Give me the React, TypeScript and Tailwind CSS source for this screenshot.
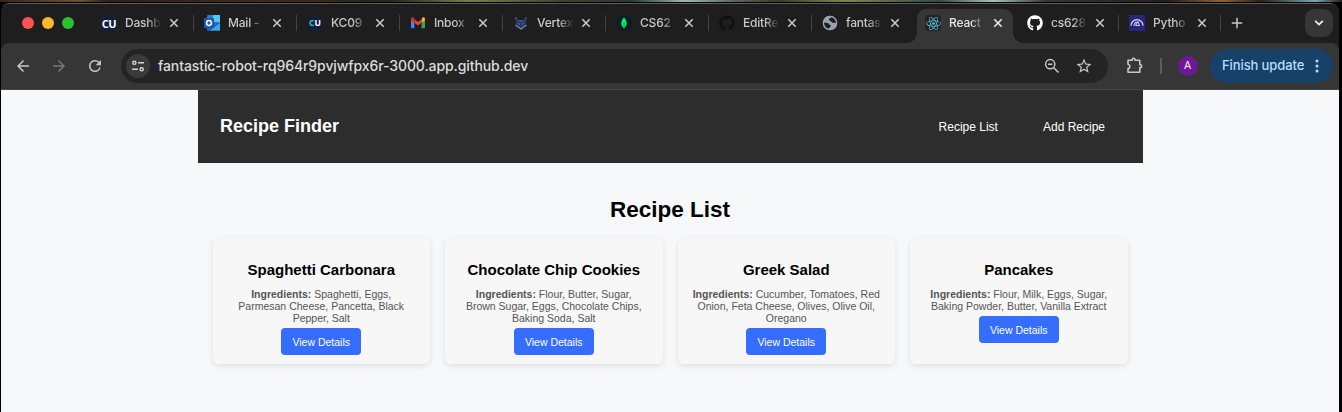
import type { ReactNode } from "react";
import { FaGithub, FaReact } from "react-icons/fa";
import { MdArrowBack, MdArrowForward, MdRefresh, MdStarOutline } from "react-icons/md";

function DashIcon() {
  return (
    <span className="flex h-4 w-4 items-center justify-center bg-[#12203a] font-['Open_Sans',sans-serif] text-[11px] leading-none font-bold tracking-[-0.3px] text-white">
      CU
    </span>
  );
}

function OutlookIcon() {
  return (
    <svg width="16" height="16" viewBox="0 0 16 16">
      <rect x="3" y="0" width="13" height="15.5" rx="1" fill="#2a7fd0" />
      <rect x="9" y="0" width="7" height="7" fill="#50c8f5" />
      <path d="M3 8h13v6.500a1 1 0 0 1-1 1H4a1 1 0 0 1-1-1z" fill="#1b64b6" />
      <path d="M16 8v7.500H6z" fill="#3ba7e8" />
      <rect x="0" y="3" width="10" height="10" rx="1" fill="#1d57b8" />
      <circle cx="5" cy="8" r="2.400" fill="none" stroke="#fff" strokeWidth="1.500" />
    </svg>
  );
}

function CourseIcon() {
  return (
    <span className="flex h-[15px] w-4 items-center justify-center rounded-full bg-[#12203a] font-['Open_Sans',sans-serif] text-[8.500px] leading-none font-bold text-white">
      <span className="text-[#3fc1c9]">C</span>U
    </span>
  );
}

function GmailIcon() {
  return (
    <svg width="16" height="16" viewBox="0 0 16 16">
      <path d="M1 5v7.200a1 1 0 0 0 1 1h2.400V7z" fill="#4285f4" />
      <path d="M15 5v7.200a1 1 0 0 1-1 1h-2.400V7z" fill="#34a853" />
      <path d="M11.600 4.300v3.500L15 5.200V4c0-1.600-1.700-2-2.600-1.300z" fill="#fbbc04" />
      <path d="M4.400 4.300 8 7l3.600-2.700v3.500L8 10.500 4.400 7.800z" fill="#ea4335" />
      <path d="M1 4v1.200l3.400 2.600V4.300L3.600 2.700C2.700 2 1 2.400 1 4z" fill="#d93025" />
    </svg>
  );
}

function VertexIcon() {
  return (
    <svg width="16" height="16" viewBox="0 0 16 16" fill="none">
      <path d="M3 2.500v7L8 13l5-3.500v-7L10.500 5h-5z" fill="#293a65" />
      <path d="M3 2v3M13 2v3M5.500 5.500h1M9.500 5.500h1M5 8l2 1.500M11 8 9 9.500M8 5v2" stroke="#55669c" strokeWidth="1" />
      <path d="m2.500 10 5.500 4 5.500-4" stroke="#7385be" strokeWidth="1.300" />
    </svg>
  );
}

function MongoIcon() {
  return (
    <svg width="16" height="16" viewBox="0 0 16 16">
      <circle cx="8" cy="8" r="8" fill="#071e2b" />
      <path d="M8 2.500c3.700 4 3.200 8.500.3 10.300v.9h-.6v-.9C4.800 11 4.300 6.500 8 2.500z" fill="#13f05c" />
      <path d="M8 7v5" stroke="#087846" strokeWidth=".7" />
    </svg>
  );
}

function GlobeIcon() {
  return (
    <svg width="16" height="16" viewBox="0 0 16 16">
      <circle cx="8" cy="8" r="7.200" fill="#9aa0ac" />
      <path d="M1.900 7.500 5.600 8c1.300.2 1 1.500 2 1.700 1 .3 1.700 1 .9 2-.7.700-1.500.6-1.500 2.400A6.400 6.400 0 0 1 1.900 7.500z" fill="#1e1e1e" />
      <path d="M9.300 1.900c-.2 1.300-2.300 1-2.500 2.100-.1 1 1 .9 1.200 1.700.2.900 1.500.6 2 1.400.6.900 1.700 1 2.700.7.700-.2 1.200.1 1.600.3A6.400 6.400 0 0 0 9.300 1.900z" fill="#1e1e1e" />
      <circle cx="8" cy="8" r="6.600" fill="none" stroke="#9aa0ac" strokeWidth="1.300" />
    </svg>
  );
}

function GaugeIcon() {
  return (
    <svg width="16" height="16" viewBox="0 0 16 16" fill="none">
      <path d="M0 0h16v16H0z" fill="#29257a" />
      <path d="M2 10.700a6 6 0 0 1 12 0M5 10.700A3.500 3.500 0 0 1 8.500 7" stroke="#d5d5f2" strokeWidth="1.200" />
      <path d="m6.500 10.500 2.500-4 1.500 4z" stroke="#d5d5f2" strokeWidth="1" />
    </svg>
  );
}

const tabs: { title: string; icon: ReactNode; kind?: "active" | "after" | "beforeActive" }[] = [
  { title: "Dashb", icon: <DashIcon /> },
  { title: "Mail -", icon: <OutlookIcon /> },
  { title: "KC09", icon: <CourseIcon /> },
  { title: "Inbox", icon: <GmailIcon /> },
  { title: "Vertex", icon: <VertexIcon /> },
  { title: "CS62", icon: <MongoIcon /> },
  { title: "EditRe", icon: <FaGithub size={16} color="#111111" /> },
  { title: "fantas", icon: <GlobeIcon />, kind: "beforeActive" },
  {
    title: "React",
    icon: (
      <span className="flex h-4 w-4 items-center justify-center rounded-sm bg-[#202224]">
        <FaReact size={15} color="#58c4dc" />
      </span>
    ),
    kind: "active",
  },
  { title: "cs628", icon: <FaGithub size={16} color="#ffffff" />, kind: "after" },
  { title: "Pytho", icon: <GaugeIcon />, kind: "after" },
];

function CloseIcon({ color }: { color: string }) {
  return (
    <svg width="10" height="10" viewBox="0 0 10 10" stroke={color} strokeWidth="1.600">
      <path d="m1.300 1.300 7.400 7.400M8.700 1.300 1.300 8.700" />
    </svg>
  );
}

function Tab({ title, icon, kind }: (typeof tabs)[number]) {
  const active = kind === "active";
  return (
    <div className={`relative flex h-full shrink-0 items-center pb-[1px] ${active || kind === "after" ? "w-[102px]" : "w-[103px]"}`}>
      {active && (
        <div className="absolute top-[5px] bottom-0 left-[2px] w-[96px] rounded-t-[9px] bg-[#363636]">
          <span className="absolute bottom-0 -left-[10px] h-[10px] w-[10px] bg-[radial-gradient(circle_at_0_0,transparent_9.500px,#363636_10px)]" />
          <span className="absolute -right-[10px] bottom-0 h-[10px] w-[10px] bg-[radial-gradient(circle_at_100%_0,transparent_9.500px,#363636_10px)]" />
        </div>
      )}
      <span className="relative ml-[10px] flex h-4 w-4 shrink-0 items-center justify-center">{icon}</span>
      <span
        className={`relative ml-2 w-[44px] shrink-0 mask-[linear-gradient(90deg,#000_22px,rgba(0,0,0,0.15)_34px)] text-[12px] leading-4 font-medium tracking-[-0.200px] whitespace-nowrap ${active ? "text-[#e3e3e3]" : "text-[#c7c7c7]"}`}
      >
        {title}
      </span>
      <span className="relative">
        <CloseIcon color={active ? "#e8e8e8" : "#c7c7c7"} />
      </span>
      {!active && kind !== "beforeActive" && <span className="ml-auto h-4 w-[1.500px] bg-[#424242]" />}
    </div>
  );
}

function TabStrip() {
  return (
    <div className="flex h-[39px] items-center bg-[#1e1e1e]">
      <div className="flex w-[90px] shrink-0 items-center gap-2 pb-[1px] pl-[21px]">
        <span className="h-3 w-3 rounded-full bg-[#ff544d]" />
        <span className="h-3 w-3 rounded-full bg-[#fdb827]" />
        <span className="h-3 w-3 rounded-full bg-[#28c132]" />
      </div>
      {tabs.map((t) => (
        <Tab key={t.title} {...t} />
      ))}
      <svg className="mb-[1px] ml-[10px] shrink-0" width="12" height="12" viewBox="0 0 12 12" stroke="#c7c7c7" strokeWidth="1.500">
        <path d="M6 .8v10.400M.8 6h10.400" />
      </svg>
      <span className="mr-[6px] mb-[1px] ml-auto flex h-7 w-7 items-center justify-center rounded-[9px] bg-[#363636]">
        <svg width="10" height="8" viewBox="0 0 10 8" fill="none" stroke="#efefef" strokeWidth="1.800">
          <path d="m1.200 1.800 3.800 3.800 3.800-3.800" />
        </svg>
      </span>
    </div>
  );
}

function Toolbar() {
  return (
    <div className="flex h-[47px] items-center rounded-t-lg border-b border-[#464646] bg-[#363636] pl-[13px]">
      <MdArrowBack size={18} color="#c7c7c7" />
      <MdArrowForward className="ml-[18px]" size={18} color="#777777" />
      <MdRefresh className="ml-[18px]" size={18} color="#c7c7c7" />
      <div className="ml-[17px] flex h-[34px] w-[987px] items-center rounded-full bg-[#242424] pl-[5px]">
        <span className="flex h-6 w-6 items-center justify-center rounded-full bg-[#3a3a3a]">
          <svg width="14" height="14" viewBox="0 0 14 14" fill="none" stroke="#d5d5d5" strokeWidth="1.400">
            <circle cx="3.300" cy="3.800" r="1.600" />
            <path d="M7 3.800h6M1 10.300h6" />
            <circle cx="10.700" cy="10.300" r="1.600" />
          </svg>
        </span>
        <span className="ml-[8px] pb-[2px] text-[14px] font-medium tracking-[-0.090px] whitespace-nowrap text-[#dcdcdc]">
          fantastic-robot-rq964r9pvjwfpx6r-3000.app.github.dev
        </span>
        <svg className="ml-auto" width="16" height="16" viewBox="0 0 16 16" fill="none" stroke="#c7c7c7" strokeWidth="1.500">
          <circle cx="6.200" cy="6.200" r="4.600" />
          <path d="m9.500 9.500 5 5M4 6.200h4.400" />
        </svg>
        <MdStarOutline className="mr-[15px] ml-[15px]" size={18} color="#c7c7c7" />
      </div>
      <svg className="ml-[18px]" width="18" height="18" viewBox="0 0 18 18" fill="none" stroke="#c7c7c7" strokeWidth="1.600" strokeLinejoin="round">
        <path d="M2 3.300h4.200v-.6a1.400 1.400 0 0 1 2.800 0v.6h4.800v4.500h.5a1.400 1.400 0 0 1 0 2.800h-.5v4.700H2v-3.700c2.500-.3 2.500-4 0-4.300z" />
      </svg>
      <span className="ml-[16px] h-4 w-[1.500px] bg-[#5c5c5c]" />
      <span className="ml-[16px] flex h-5 w-5 items-center justify-center rounded-full bg-[#6d1799] text-[10.500px] font-normal text-white">A</span>
      <div className="mr-[6px] ml-auto flex h-[34px] w-[123px] items-center rounded-full bg-[#174169] pl-3 text-[13px] font-medium whitespace-nowrap text-[#b7ddff]">
        <span className="tracking-[-0.100px]">Finish update</span>
        <svg className="mr-[14px] ml-auto" width="4" height="14" viewBox="0 0 4 14" fill="#b7ddff">
          <circle cx="2" cy="2" r="1.500" />
          <circle cx="2" cy="7" r="1.500" />
          <circle cx="2" cy="12" r="1.500" />
        </svg>
      </div>
    </div>
  );
}

const recipes = [
  { name: "Spaghetti Carbonara", lines: ["Spaghetti, Eggs,", "Parmesan Cheese, Pancetta, Black", "Pepper, Salt"] },
  { name: "Chocolate Chip Cookies", lines: ["Flour, Butter, Sugar,", "Brown Sugar, Eggs, Chocolate Chips,", "Baking Soda, Salt"] },
  { name: "Greek Salad", lines: ["Cucumber, Tomatoes, Red", "Onion, Feta Cheese, Olives, Olive Oil,", "Oregano"] },
  { name: "Pancakes", lines: ["Flour, Milk, Eggs, Sugar,", "Baking Powder, Butter, Vanilla Extract"] },
];

function RecipePage() {
  return (
    <main className="flex-1 bg-[#f7f8fa] font-['Liberation_Sans',Arial,sans-serif]">
      <div className="ml-[196.500px] w-[945px]">
        <header className="flex h-[73px] items-center bg-[#2d2d2d] pr-[37.500px] pl-[22.500px] text-white">
          <h1 className="text-[18px] font-bold">Recipe Finder</h1>
          <nav className="ml-auto flex gap-[45px] text-[12px]">
            <a>Recipe List</a>
            <a>Add Recipe</a>
          </nav>
        </header>
        <h2 className="mt-[33px] text-center text-[22.500px] leading-[27px] font-bold text-black">Recipe List</h2>
        <div className="mt-[15px] grid grid-cols-4 gap-[15px] px-[15px]">
          {recipes.map((r) => (
            <article
              key={r.name}
              className="flex h-[126px] flex-col items-center rounded-md bg-[#f7f7f7] pt-[23px] text-center shadow-[0_2px_6px_rgba(0,0,0,0.1)]"
            >
              <h3 className="text-[15px] leading-[18px] font-bold whitespace-nowrap text-black">{r.name}</h3>
              <p className="mt-[9px] text-[10.500px] leading-3 whitespace-nowrap text-[#555555]">
                {r.lines.map((line, i) => (
                  <span key={line} className="block">
                    {i === 0 && <strong>Ingredients: </strong>}
                    {line}
                  </span>
                ))}
              </p>
              <button className="mt-[4px] h-[27px] w-[80px] rounded bg-[#356dff] pt-[2px] text-[10.500px] whitespace-nowrap text-white">
                View Details
              </button>
            </article>
          ))}
        </div>
      </div>
    </main>
  );
}

export default function App() {
  return (
    <div className="flex h-[412px] w-[1342px] flex-col overflow-hidden bg-black font-[Inter,sans-serif]">
      <div className="h-[2px] shrink-0 bg-[linear-gradient(90deg,#38251b_0%,#70502b_6%,#2b2117_8%,#42291e_20%,#252517_29%,#74804b_35%,#453f2a_42%,#283a32_47%,#9bb7b4_51%,#546454_55%,#3e3a22_58%,#7b884d_63%,#354a45_70%,#a2c3c4_74%,#39342b_78%,#251e1b_87%,#906132_91%,#282018_94%,#75a9b6_98%,#201f1b_100%)]" />
      <div className="mt-[1px] mr-[3px] flex flex-1 flex-col overflow-hidden rounded-t-[9px] border-t border-l border-t-[#5d5d5d] border-l-black bg-[#1e1e1e]">
        <TabStrip />
        <Toolbar />
        <RecipePage />
      </div>
    </div>
  );
}
